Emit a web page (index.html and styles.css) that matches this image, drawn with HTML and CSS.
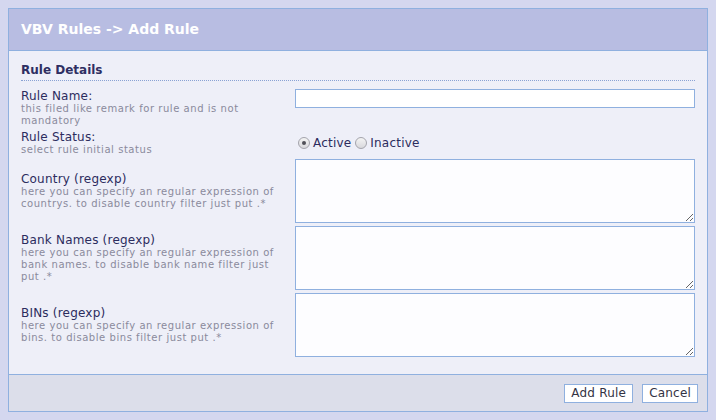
FILE: index.html
```html
<!DOCTYPE html>
<html>
<head>
<meta charset="utf-8">
<title>VBV Rules -> Add Rule</title>
<link rel="stylesheet" href="styles.css">
</head>
<body>
<div class="panel">
  <div class="panel-head">VBV Rules -&gt; Add Rule</div>
  <div class="panel-body">
    <div class="section-title">Rule Details</div>
    <div class="form">
      <div class="label">
        <div class="name">Rule Name:</div>
        <div class="desc">this filed like remark for rule and is not mandatory</div>
      </div>
      <div class="field top"><input type="text" class="text"></div>

      <div class="label">
        <div class="name">Rule Status:</div>
        <div class="desc">select rule initial status</div>
      </div>
      <div class="field radios">
        <label class="opt"><input type="radio" name="status" checked><span>Active</span></label>
        <label class="opt"><input type="radio" name="status"><span>Inactive</span></label>
      </div>

      <div class="label">
        <div class="name">Country (regexp)</div>
        <div class="desc">here you can specify an regular expression of countrys. to disable country filter just put .*</div>
      </div>
      <div class="field"><textarea></textarea></div>

      <div class="label">
        <div class="name">Bank Names (regexp)</div>
        <div class="desc">here you can specify an regular expression of bank names. to disable bank name filter just put .*</div>
      </div>
      <div class="field"><textarea></textarea></div>

      <div class="label">
        <div class="name">BINs (regexp)</div>
        <div class="desc">here you can specify an regular expression of bins. to disable bins filter just put .*</div>
      </div>
      <div class="field"><textarea></textarea></div>
    </div>
  </div>
  <div class="panel-foot">
    <button class="btn">Add Rule</button>
    <button class="btn">Cancel</button>
  </div>
</div>
</body>
</html>
```
FILE: styles.css
```css
html, body {
  margin: 0;
  padding: 0;
}
body {
  background: #d4d7ef;
  padding: 8px;
  font-family: Verdana, "DejaVu Sans", sans-serif;
  color: #2c2c5e;
}
.panel {
  width: 698px;
  border: 1px solid #8fb0df;
  background: #eeeff8;
}
.panel-head {
  height: 41px;
  line-height: 41px;
  background: #b8bde2;
  border-bottom: 1px solid #8fb0df;
  color: #ffffff;
  font-weight: bold;
  font-size: 14px;
  padding-left: 12px;
}
.panel-body {
  padding: 11px 12px 17px 12px;
}
.section-title {
  font-size: 12px;
  font-weight: bold;
  color: #2e2e62;
  line-height: 16px;
  padding-bottom: 2px;
  border-bottom: 1px dotted #8aa2d4;
}
.form {
  display: grid;
  grid-template-columns: 262px 400px;
  column-gap: 12px;
  row-gap: 3px;
  align-items: center;
  margin-top: 8px;
}
.label .name {
  font-size: 12px;
  line-height: 14px;
  letter-spacing: 0.2px;
  color: #2c2c5e;
}
.label .desc {
  font-size: 10px;
  line-height: 12px;
  letter-spacing: 0.55px;
  color: #8a8a9c;
}
.field.top {
  align-self: start;
}
.text {
  display: block;
  box-sizing: border-box;
  width: 400px;
  height: 19px;
  margin: 0;
  border: 1px solid #8fb0df;
  background: #ffffff;
  padding: 0 3px;
}
textarea {
  display: block;
  box-sizing: border-box;
  width: 400px;
  height: 64px;
  margin: 0;
  border: 1px solid #8fb0df;
  background: #fdfdff;
  padding: 2px;
  font-family: Verdana, "DejaVu Sans", sans-serif;
}
.radios {
  display: flex;
  align-items: center;
  gap: 4px;
  padding-left: 3px;
}
.opt {
  display: flex;
  align-items: center;
  gap: 3px;
  font-size: 12px;
  letter-spacing: 0.2px;
  color: #2c2c5e;
}
.opt input {
  -webkit-appearance: none;
  appearance: none;
  width: 12px;
  height: 12px;
  margin: 0;
  border: 1px solid #a4a4ac;
  border-radius: 50%;
  background: linear-gradient(#f4f4f4, #d8d8dc);
  box-sizing: border-box;
  position: relative;
}
.opt input:checked::after {
  content: "";
  position: absolute;
  left: 3px;
  top: 3px;
  width: 4px;
  height: 4px;
  border-radius: 50%;
  background: #505058;
}
.panel-foot {
  height: 36px;
  border-top: 1px solid #8fb0df;
  background: #dcdeea;
  display: flex;
  justify-content: flex-end;
  align-items: center;
  gap: 9px;
  padding-right: 9px;
}
.btn {
  height: 19px;
  padding: 0 6px;
  margin: 0;
  border: 1px solid #8fb0df;
  background: #ffffff;
  color: #333344;
  font-family: Verdana, "DejaVu Sans", sans-serif;
  font-size: 12px;
  letter-spacing: 0.2px;
  line-height: 17px;
}
```
